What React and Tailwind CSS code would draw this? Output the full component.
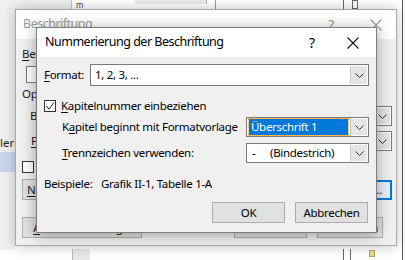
import React from 'react';

const font = { fontFamily: '"Noto Sans", "Segoe UI", sans-serif' };

const Chevron = ({ className = '' }) => (
  <svg width="9" height="5" viewBox="0 0 9 5" className={className}>
    <path d="M0.5 0.5 L4.5 4.5 L8.5 0.5" fill="none" stroke="#333" strokeWidth="1" />
  </svg>
);

const Combo = ({ children, className = '' }) => (
  <div className={`flex items-stretch border border-[#7a7a7a] bg-white ${className}`}>
    <div className="flex-1 flex items-center min-w-0">{children}</div>
    <div className="w-[17px] m-px ml-0 bg-[#e5e5e5] border-l border-[#c8c8c8] flex items-center justify-center">
      <Chevron />
    </div>
  </div>
);

const U = ({ children }) => <span className="underline underline-offset-2">{children}</span>;

// hidden parent window ("Beschriftung"), mostly covered by the numbering dialog
const ParentDialog = () => (
  <div className="absolute left-[15px] top-[9px] w-[382px] h-[237px] border border-[#a8a8a8] bg-[#f0f0f0] shadow-[0_0_12px_rgba(0,0,0,0.25)] text-[11.5px] tracking-[-0.3px] text-[#1a1a1a]">
    <div className="h-[29px] bg-white flex items-center pl-[7px] text-[#9a9a9a] text-[12.5px] tracking-[-0.5px]">
      <span className="flex-1">Beschriftung</span>
      <span className="w-[20px] text-center mr-[29px] text-[14px]">?</span>
      <svg width="12" height="12" viewBox="0 0 12 12" className="mr-[14px]">
        <path d="M0.5 0.5 L11.5 11.5 M11.5 0.5 L0.5 11.5" stroke="#9a9a9a" strokeWidth="1.1" />
      </svg>
    </div>
    <div className="flex flex-col pl-[6px] pr-[4px]">
      <div className="h-[16px] mt-[7px] leading-[16px] w-[15px] overflow-hidden"><U>B</U>eschriftung:</div>
      <div className="h-[17px] mt-[4px] ml-[4px] w-[330px] border border-[#7a7a7a] bg-white" />
      <div className="h-[16px] mt-[3px] leading-[16px] w-[15px] overflow-hidden">Optionen</div>
      <div className="flex items-center h-[20px] mt-[4px]">
        <span className="ml-[8px] w-[7px] overflow-hidden">Bezeichnung:</span>
        <div className="flex-1" />
        <Combo className="w-[200px] h-[20px]" />
      </div>
      <div className="flex items-center h-[20px] mt-[5px]">
        <span className="ml-[9px] w-[7px] overflow-hidden"><U>P</U>osition:</span>
        <div className="flex-1" />
        <Combo className="w-[200px] h-[20px]" />
      </div>
      <div className="h-[12px] mt-[10px] w-[12px] border border-[#333] bg-white" />
      <div className="flex items-center h-[21px] mt-[6px]">
        <div className="h-[21px] w-[110px] border border-[#adadad] bg-[#e1e1e1] flex items-center pl-[4px]"><span className="w-[11px] overflow-hidden"><U>N</U>eue</span></div>
        <div className="flex-1" />
        <div className="h-[20px] w-[110px] border-2 border-[#0078d7] bg-[#e5f1fb] flex items-center justify-end pr-[8px]">...</div>
      </div>
      <div className="flex items-center h-[21px] mt-[17px]">
        <div className="h-[21px] w-[120px] border border-[#adadad] bg-[#e1e1e1] flex items-center pl-[10px]"><span><U>A</U>utobeschriftung...</span></div>
        <div className="flex-1" />
        <div className="h-[21px] w-[73px] border border-[#adadad] bg-[#e1e1e1] flex items-center justify-center">OK</div>
        <div className="h-[21px] w-[66px] ml-[10px] mr-[9px] border border-[#adadad] bg-[#e1e1e1] flex items-center justify-center">Abbrechen</div>
      </div>
    </div>
  </div>
);

const Button = ({ children }) => (
  <div className="w-[73px] h-[21px] border border-[#adadad] bg-[#e1e1e1] flex items-center justify-center">{children}</div>
);

const NumberingDialog = () => (
  <div className="absolute left-[36px] top-[27px] w-[341px] h-[206px] border border-[#7c7c7c] bg-[#f0f0f0] shadow-[0_2px_14px_rgba(0,0,0,0.35)] text-[11.5px] tracking-[-0.3px] text-black flex flex-col">
    <div className="h-[29px] bg-white flex items-center pl-[8px] shrink-0">
      <span className="flex-1 text-[12.5px] tracking-[-0.5px]">Nummerierung der Beschriftung</span>
      <span className="w-[20px] text-center text-[14px] mr-[25px]">?</span>
      <svg width="12" height="12" viewBox="0 0 12 12" className="mr-[17px]">
        <path d="M0.5 0.5 L11.5 11.5 M11.5 0.5 L0.5 11.5" stroke="#111" strokeWidth="1.1" />
      </svg>
    </div>

    <div className="flex flex-col px-[7px]">
      <div className="flex items-center mt-[7px] h-[22px]">
        <span className="w-[46px]"><U>F</U>ormat:</span>
        <Combo className="flex-1 h-[22px]">
          <span className="pl-[4px]">1, 2, 3, ...</span>
        </Combo>
      </div>

      <div className="flex items-center mt-[13px] h-[13px]">
        <div className="w-[12px] h-[12px] border border-[#333] bg-white flex items-center justify-center">
          <svg width="10" height="10" viewBox="0 0 10 10">
            <path d="M1 5 L4 8 L9 1.5" fill="none" stroke="#222" strokeWidth="1" />
          </svg>
        </div>
        <span className="ml-[5px]"><U>K</U>apitelnummer einbeziehen</span>
      </div>

      <div className="flex items-center mt-[5px] h-[20px]">
        <span className="pl-[18px] flex-1">K<U>a</U>pitel beginnt mit Formatvorlage</span>
        <Combo className="w-[123px] h-[20px]">
          <div className="mx-[2px] flex-1 h-[16px] bg-[#0078d7] text-white flex items-center pl-[2px] outline-1 outline-dotted outline-[#f0a030]">Überschrift 1</div>
        </Combo>
      </div>

      <div className="flex items-center mt-[6px] h-[20px]">
        <span className="pl-[18px] flex-1"><U>T</U>rennzeichen verwenden:</span>
        <Combo className="w-[123px] h-[20px]">
          <span className="pl-[5px] w-[23px]">-</span>
          <span>(Bindestrich)</span>
        </Combo>
      </div>

      <div className="flex items-center mt-[13px] h-[16px]">
        <span className="w-[57px]">Beispiele:</span>
        <span>Grafik II-1, Tabelle 1-A</span>
      </div>

      <div className="flex justify-end gap-[10px] mt-[10px] mr-[1px]">
        <Button>OK</Button>
        <Button>Abbrechen</Button>
      </div>
    </div>
  </div>
);

export default function App() {
  return (
    <div className="relative w-[405px] h-[260px] overflow-hidden bg-white whitespace-nowrap" style={font}>
      {/* word window behind */}
      <div className="absolute left-0 top-0 w-[72px] h-[9px] bg-[#f0f0f0] border-r border-[#c8c8c8]" />
      <div className="absolute left-[135px] top-0 w-[72px] h-[4px] bg-[#ececec] border-r border-[#b0b0b0]" />
      <div className="absolute left-[215px] top-0 w-px h-[9px] bg-[#9a9a9a]" />
      <div className="absolute left-[343px] top-0 w-px h-[9px] bg-[#6a6a6a]" />
      <div className="absolute left-[352px] top-0 w-[6px] h-[9px] border border-[#6a6a6a]" />
      <div className="absolute left-[76px] top-[1px] text-[8px] leading-none text-[#444]">m</div>
      <div className="absolute left-0 top-0 w-[15px] h-[250px] bg-[#f0f0f0]" />
      <div className="absolute left-0 top-[134px] text-[11.5px] text-[#222]">ler</div>
      <div className="absolute left-0 top-[152px] w-[15px] h-[20px] bg-[#c9d7f0]" />
      <div className="absolute left-[402px] top-0 w-px h-[260px] bg-[#555]" />
      <div className="absolute left-[72px] top-[249px] w-[18px] h-[11px] bg-[#e8e8e8] border-l border-[#bbb]" />
      <div className="absolute left-[343px] top-[249px] w-px h-[11px] bg-[#666]" />
      <div className="absolute left-[350px] top-[249px] w-px h-[11px] bg-[#666]" />
      <div className="absolute left-[369px] top-[250px] w-[6px] h-[7px] bg-[#e8d890] border border-[#b0a060]" />

      <ParentDialog />
      <NumberingDialog />
    </div>
  );
}
